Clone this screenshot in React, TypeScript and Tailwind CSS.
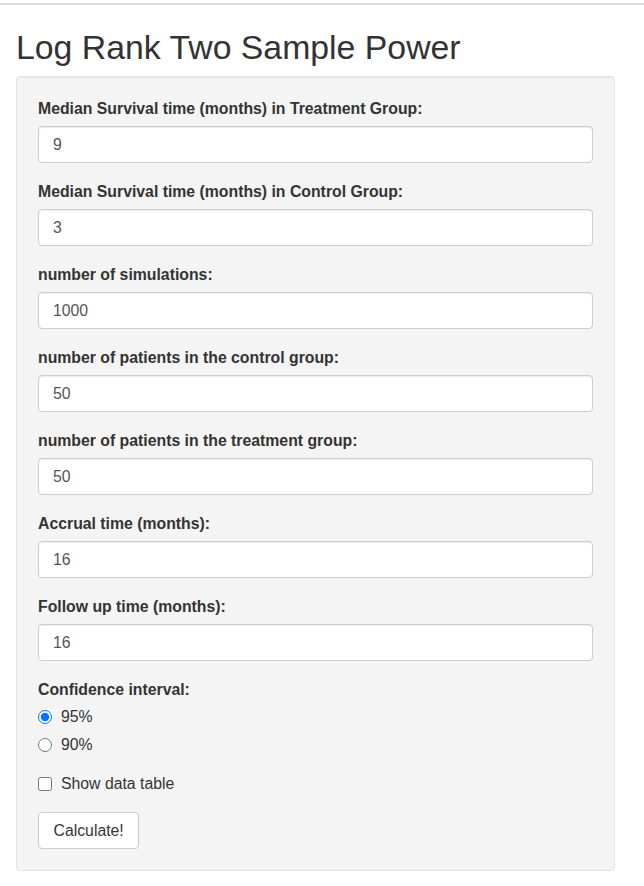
import React, { useState } from 'react'

const fields = [
  { label: 'Median Survival time (months) in Treatment Group:', value: '9' },
  { label: 'Median Survival time (months) in Control Group:', value: '3' },
  { label: 'number of simulations:', value: '1000' },
  { label: 'number of patients in the control group:', value: '50' },
  { label: 'number of patients in the treatment group:', value: '50' },
  { label: 'Accrual time (months):', value: '16' },
  { label: 'Follow up time (months):', value: '16' },
]

function NumberField({ label, value }: { label: string; value: string }) {
  const [val, setVal] = useState(value)
  return (
    <div className="mb-[18px]">
      <label className="block font-bold leading-[22px] mb-[6px]">{label}</label>
      <input
        type="number"
        value={val}
        onChange={(e) => setVal(e.target.value)}
        className="block w-full h-[37px] px-[14px] bg-white border border-[#cccccc] rounded-[4px] text-[#555555] shadow-[inset_0_1px_1px_rgba(0,0,0,0.075)] outline-none [appearance:textfield] [&::-webkit-inner-spin-button]:appearance-none"
      />
    </div>
  )
}

export default function App() {
  const [ci, setCi] = useState('95')
  const [showTable, setShowTable] = useState(false)

  return (
    <div className="min-h-screen bg-white text-[#333333] text-[15.8px] leading-[22px] font-['Liberation_Sans',Arial,sans-serif]">
      <div className="pt-[3px]">
        <div className="h-[2px] bg-[#dcdce0]" />
      </div>
      <div className="px-4">
        <h2 className="mt-[24px] mb-[11px] text-[33.8px] leading-[36px] font-normal">
          Log Rank Two Sample Power
        </h2>
        <div className="w-[599px] bg-[#f4f4f4] border border-[#e3e3e3] rounded-[4px] p-[21px] shadow-[inset_0_1px_1px_rgba(0,0,0,0.05)]">
          {fields.map((f) => (
            <NumberField key={f.label} label={f.label} value={f.value} />
          ))}

          <div className="mb-[17px]">
            <label className="block font-bold leading-[22px] mb-[5px]">Confidence interval:</label>
            <div className="flex flex-col gap-[6px]">
              {['95', '90'].map((v) => (
                <label key={v} className="flex items-center h-[22px] cursor-pointer">
                  <input
                    type="radio"
                    name="ci"
                    checked={ci === v}
                    onChange={() => setCi(v)}
                    className="w-[14px] h-[14px] m-0 accent-[#0075ff]"
                  />
                  <span className="ml-[9px]">{v}%</span>
                </label>
              ))}
            </div>
          </div>

          <label className="flex items-center h-[22px] mb-[17px] cursor-pointer">
            <input
              type="checkbox"
              checked={showTable}
              onChange={(e) => setShowTable(e.target.checked)}
              className="w-[14px] h-[14px] m-0"
            />
            <span className="ml-[9px]">Show data table</span>
          </label>

          <button className="h-[37px] px-[14.5px] bg-white border border-[#cccccc] rounded-[4px] text-[#333333]">
            Calculate!
          </button>
        </div>
      </div>
    </div>
  )
}
